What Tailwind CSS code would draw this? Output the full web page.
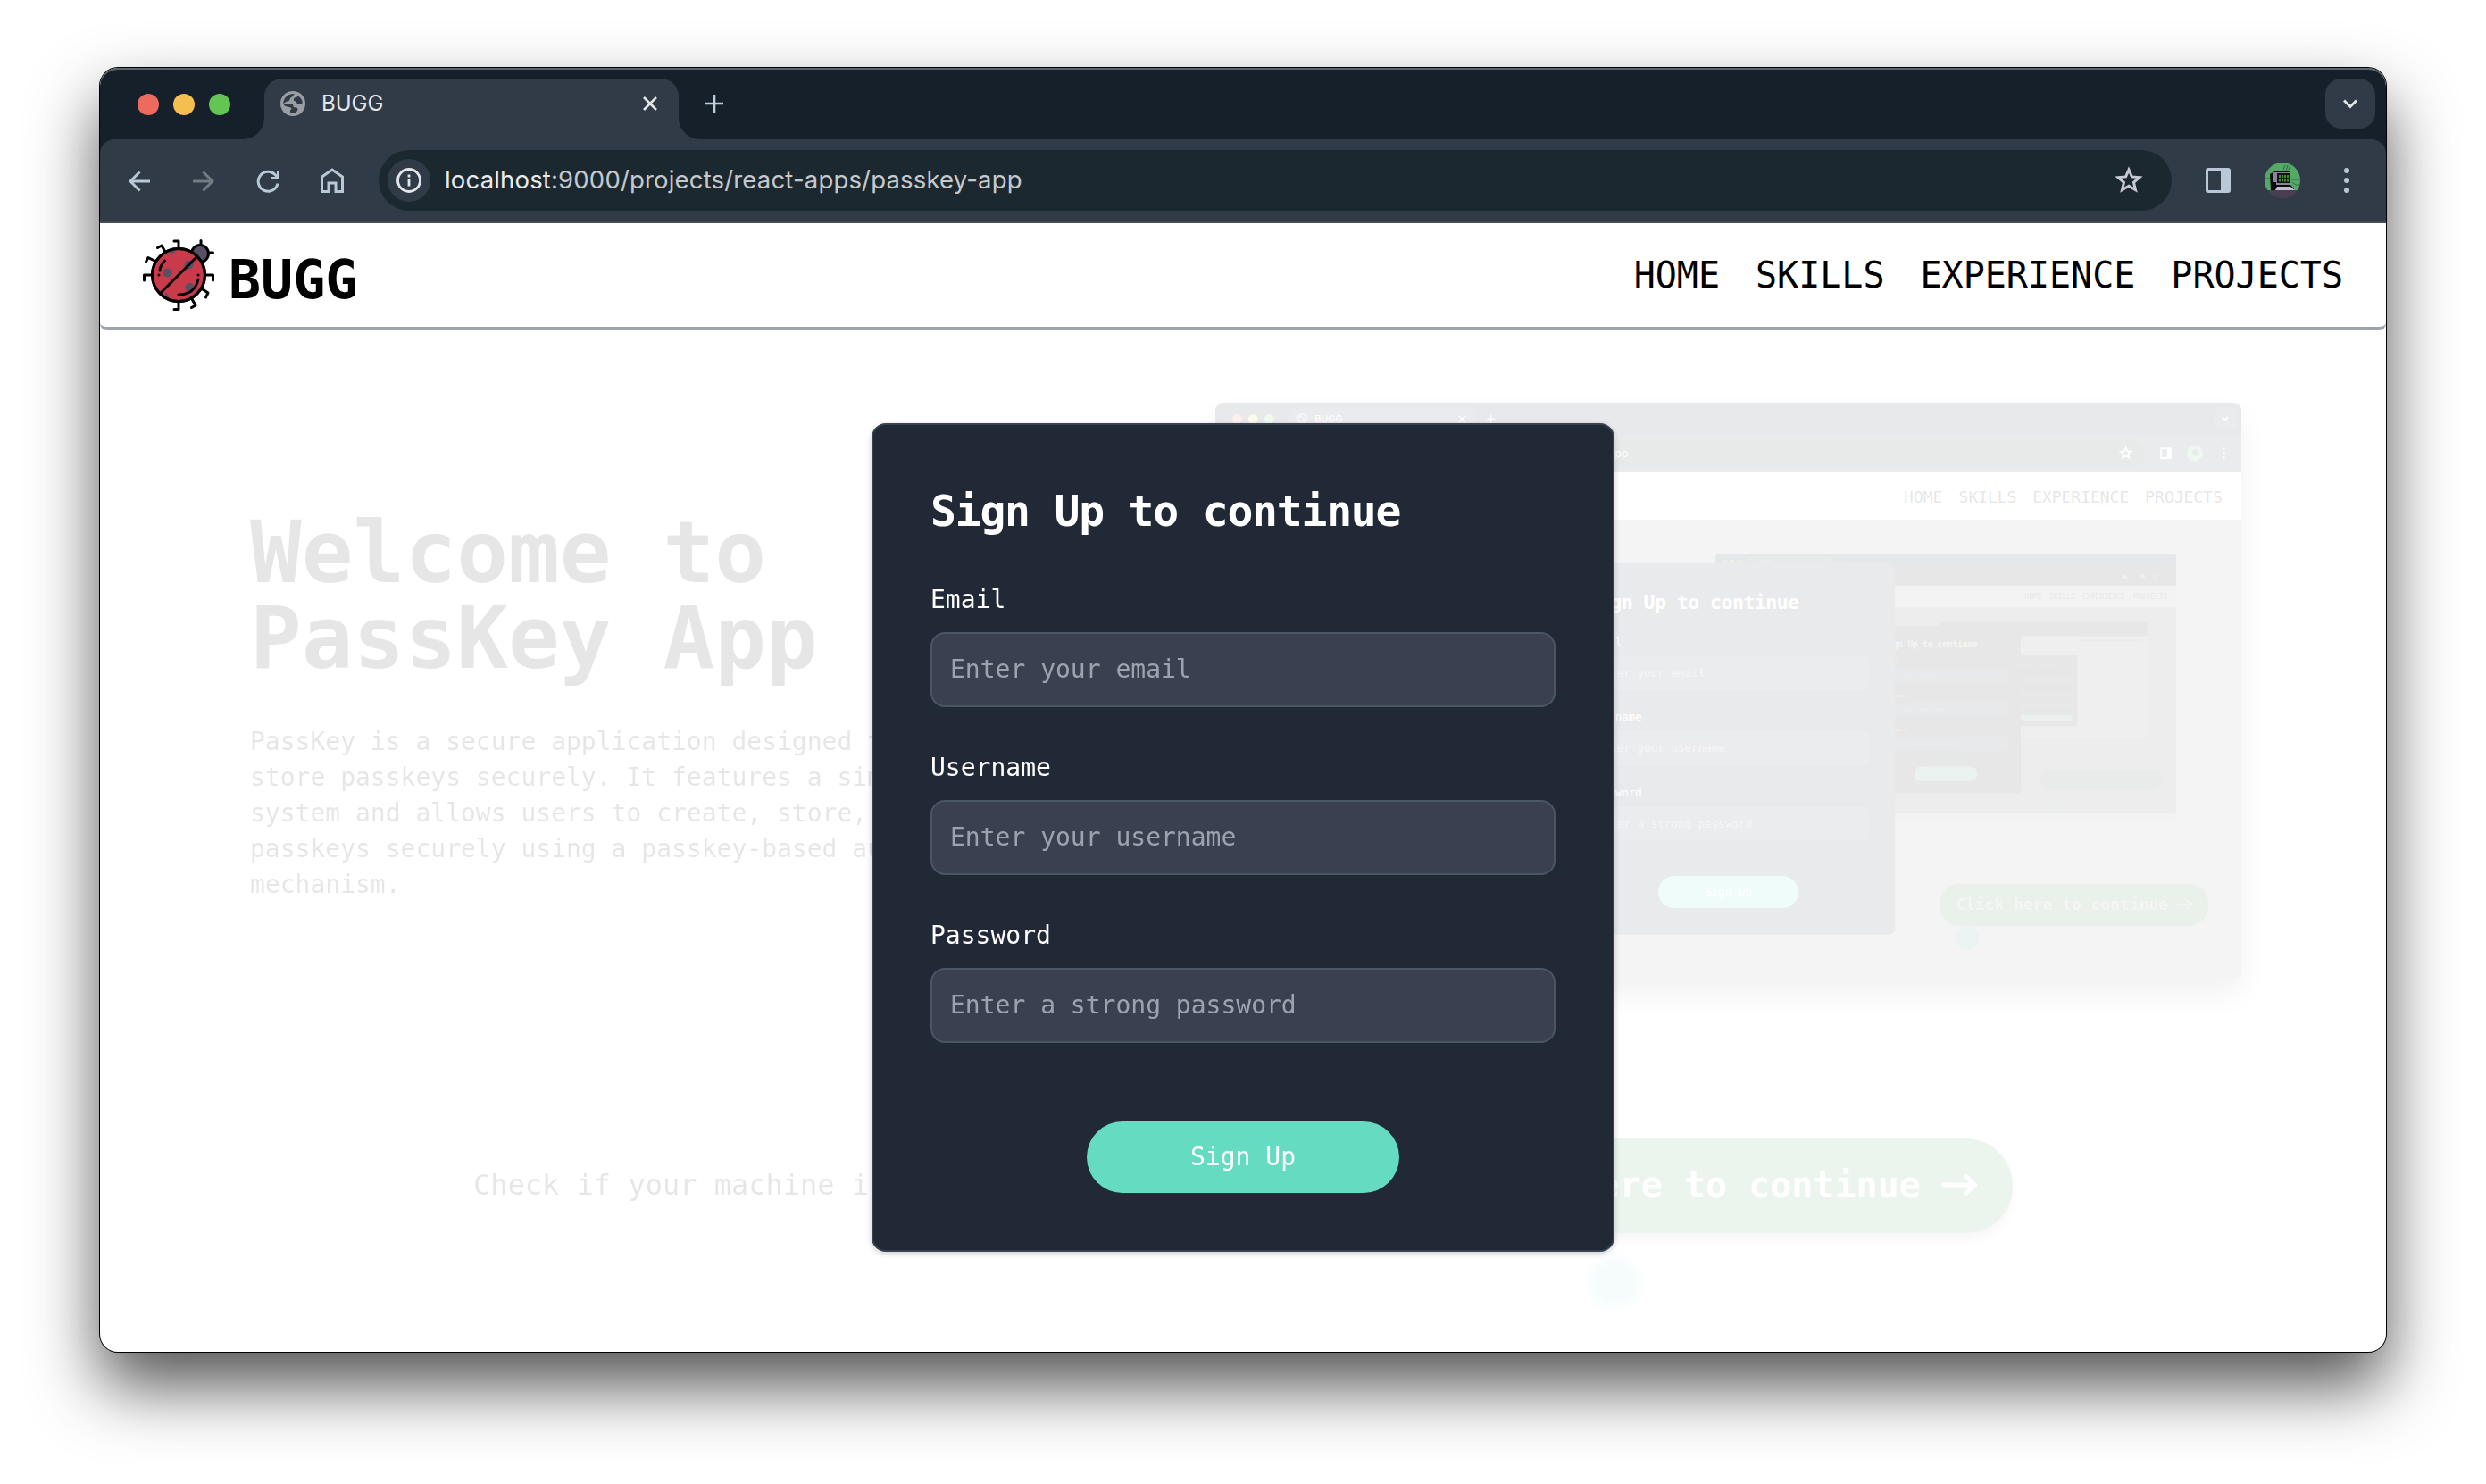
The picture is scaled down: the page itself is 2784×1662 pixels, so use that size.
<!DOCTYPE html>
<html lang="en">
<head>
<meta charset="utf-8">
<title>BUGG</title>
<script src="https://cdn.jsdelivr.net/npm/@tailwindcss/browser@4"></script>
</head>
<body class="bg-white overflow-hidden font-['DejaVu_Sans_Mono',monospace]">
<div class="w-[2784px] h-[1662px] pt-[76px] pl-[112px] overflow-hidden">
<div class="relative w-[2560px] h-[1438px] rounded-[20px] bg-white shadow-[0_0_0_1px_#000,0_38px_76px_rgba(0,0,0,0.68)]">
<div class="flex flex-col size-full rounded-[20px] overflow-hidden">

  <!-- Tab strip -->
  <div class="flex h-20 shrink-0 bg-[#15202b] rounded-t-[20px] shadow-[inset_0_2px_0_#5b666c] pl-[42px] pr-3 font-['Inter',sans-serif]">
    <div class="flex items-center gap-4 pt-[2px] w-[118px]">
      <span class="size-6 rounded-full bg-[#ed6a5e]"></span>
      <span class="size-6 rounded-full bg-[#f5bf4f]"></span>
      <span class="size-6 rounded-full bg-[#62c554]"></span>
    </div>
    <svg class="w-6 h-6 self-end" viewBox="0 0 24 24"><path d="M24 0V24H0A24 24 0 0 0 24 0Z" fill="#313b47"/></svg>
    <div class="mt-3 w-[464px] h-[68px] rounded-t-[20px] bg-[#313b47] flex items-center pl-[18px] pr-6 pb-3">
      <svg class="size-7" viewBox="0 0 28 28"><circle cx="14" cy="14" r="14" fill="#9a9da1"/><path d="M16 3.200C14 4 15 6 12.500 6.800c-1.800.6-1.500 2.400-2.500 3.700-1.200 1.500-4 .5-5.500 3L3.200 14A11 11 0 0 1 16 3.200ZM15 8.500c1-2 3.500-1 5-3A11 11 0 0 1 24.800 13c-1.800 2-4.800 2-6.300.5-1.200-1.300-1-2-2.500-2.300-1.200-.3-1.500-1.500-1-2.700ZM3.300 14H10c3.500 0 5 1.500 4.500 4 1.500.3 5 .2 5 2 0 2.500-2 4.500-5.500 4.800-2 .2-3-.3-3-.3V21c2.500 0 1.500-2.500-1-3-3-.6-6-1-6.700-4Z" fill="#313b47"/></svg>
      <span class="ml-[18px] text-[24px] leading-none text-[#e3e5e8] grow">BUGG</span>
      <svg class="size-4" viewBox="0 0 16 16" stroke="#e3e5e8" stroke-width="2.600"><path d="M1 1 15 15M15 1 1 15"/></svg>
    </div>
    <svg class="w-6 h-6 self-end" viewBox="0 0 24 24"><path d="M0 0V24H24A24 24 0 0 1 0 0Z" fill="#313b47"/></svg>
    <svg class="size-5 ml-[6px] mt-[30px]" viewBox="0 0 20 20" stroke="#c0ced9" stroke-width="2.600"><path d="M10 0V20M0 10H20"/></svg>
    <div class="ml-auto mt-3 size-14 rounded-[18px] bg-[#313b47] flex items-center justify-center">
      <svg class="w-4 h-[11px]" viewBox="0 0 16 11" fill="none" stroke="#e3e5e8" stroke-width="3"><path d="M1 1.500 8 8.500 15 1.500"/></svg>
    </div>
  </div>

  <!-- Toolbar -->
  <div class="h-[94px] shrink-0 bg-[#15202b]">
  <div class="flex items-center h-[94px] rounded-t-[16px] bg-[#313b47] shadow-[inset_0_-2px_0_#454b52] pl-[32px] pr-[38px] font-['Inter',sans-serif] pb-[2px]">
    <svg class="size-6 mt-[2px]" viewBox="0 0 24 24" fill="none" stroke="#b9c8d6" stroke-width="3"><path d="M24 12H2M12.500 1.500 2 12l10.500 10.500"/></svg>
    <svg class="size-6 ml-12 mt-[2px]" viewBox="0 0 24 24" fill="none" stroke="#717c84" stroke-width="3"><path d="M0 12H22M11.500 1.500 22 12 11.500 22.500"/></svg>
    <svg class="size-7 ml-[46px] mt-[2px]" viewBox="0 0 28 28" fill="none" stroke="#b9c8d6" stroke-width="3"><path d="M25 16.500A11 11 0 1 1 22 6.500L25 9.500M25.500 2V10.500H17"/></svg>
    <svg class="w-[26px] h-7 ml-[45px]" viewBox="0 0 26 28" fill="none" stroke="#b9c8d6" stroke-width="3"><path d="M1.500 26.500V10L13 2 24.500 10V26.500H17V17H9V26.500Z"/></svg>
    <div class="ml-[39px] w-[2008px] h-[68px] rounded-full bg-[#1c2830] flex items-center pl-[10px] pr-8">
      <div class="size-12 rounded-full bg-[#313b47] flex items-center justify-center">
        <svg class="size-7" viewBox="0 0 28 28" fill="none" stroke="#e3e5e8" stroke-width="2.800"><circle cx="14" cy="14" r="12.500"/><path d="M14 12.500V20.500M14 7.500V10.500"/></svg>
      </div>
      <div class="ml-4 grow text-[27.500px] tracking-[0.170px] leading-none text-[#c6c9cc]"><span class="text-[#e8eaec]">localhost</span>:9000/projects/react-apps/passkey-app</div>
      <svg class="size-8" viewBox="0 0 32 32" fill="none" stroke="#c6c9cf" stroke-width="3"><path d="M16 4 19.400 11.900 28 12.600 21.500 18.300 23.500 26.700 16 22.200 8.500 26.700 10.500 18.300 4 12.600 12.600 11.900Z"/></svg>
    </div>
    <svg class="size-7 ml-[38px]" viewBox="0 0 28 28"><path fill-rule="evenodd" d="M3 0H25A3 3 0 0 1 28 3V25A3 3 0 0 1 25 28H3A3 3 0 0 1 0 25V3A3 3 0 0 1 3 0ZM3 4V25H17V4Z" fill="#b9c8d6"/></svg>
    <svg class="size-10 ml-[38px] rounded-full" viewBox="0 0 40 40"><path fill="#54a868" d="M0 0H40V31H0Z"/><path fill="#4a3f52" d="M0 31H40V40H0Z"/><path d="M0 18H7M30 19H40M31 22l4 3h5M21 8l2-5M24 9l2-6M27 8l2-6" stroke="#2c6a42" fill="none"/><path fill="#0b0b0e" d="M6 13 11 10H29V25L33 29V31H7Z"/><path fill="#8b829f" d="M10 11H29V25H13V22H10Z"/><path fill="#10160f" d="M14 12H28V23H14Z"/><path stroke="#3f8f2c" stroke-width="3" stroke-dasharray="2 1" d="M16 15.500H27M16 20H27"/><path fill="#c2bccd" d="M14 27 29 27 34 31H12Z"/></svg>
    <svg class="w-[6px] h-7 ml-[49px]" viewBox="0 0 6 28" fill="#b9c8d6"><circle cx="3" cy="3" r="3"/><circle cx="3" cy="14" r="3"/><circle cx="3" cy="25" r="3"/></svg>
  </div>
  </div>

  <!-- Site header -->
  <header class="flex h-[120px] shrink-0 items-center border-b-4 border-[#9ca3af] rounded-b-[8px] pl-12 pr-12">
    <svg class="size-20" viewBox="0 0 80 80" fill="none" stroke="#000" stroke-width="3" stroke-linecap="round" stroke-linejoin="round">
      <path d="M40 10V2H35M25 14 21 7 16.500 9.500M13 24 6 20.500 3.500 25M10 40H1.500V46M70 40H78.500V46M67 56 73 60 70.500 65M55 67 59 74 54.500 76.500M40 70V78.500H35M65 9V1.500M71 15H78.500"/>
      <circle cx="64" cy="16" r="9.500" fill="#575163"/>
      <circle cx="40" cy="40" r="29.500" fill="#c93a4b"/>
      <g fill="#575163" stroke="none"><circle cx="27.500" cy="37.500" r="5"/><circle cx="51.500" cy="28.500" r="5"/><circle cx="52.500" cy="54" r="5"/><path d="M28 14q5 5 9-2ZM24 60q5 0 6 6Z"/></g>
      <circle cx="40" cy="40" r="29.500"/>
      <path d="M60 20 20 60"/>
      <path d="M24.500 24Q19 30 19 35M18 40v.1M62 40v.1M62 45Q58 62 40 62"/>
    </svg>
    <span class="ml-4 pt-[10px] text-[60px] leading-none font-bold text-black">BUGG</span>
    <nav class="ml-auto flex gap-10 text-[40px] leading-none text-black"><a>HOME</a><a>SKILLS</a><a>EXPERIENCE</a><a>PROJECTS</a></nav>
  </header>

  <!-- Page content, faded while the dialog is open -->
  <main class="relative grow opacity-10 text-black">
    <section class="flex">
      <div class="w-[1030px] pl-[168px] pt-[201px]">
        <h1 class="text-[96px] leading-[96px] font-bold">Welcome to<br>PassKey App</h1>
        <p class="mt-12 text-[28px] leading-[40px] whitespace-nowrap">PassKey is a secure application designed to<br>store passkeys securely. It features a simple<br>system and allows users to create, store, and<br>passkeys securely using a passkey-based auth<br>mechanism.</p>
      </div>
      <div class="ml-[219px] mt-[81px] w-[1149px] h-[646px] rounded-[9px] shadow-[0_16px_32px_rgba(0,0,0,0.55)]">
        <svg class="size-full rounded-[9px]" viewBox="0 0 2560 1438" preserveAspectRatio="none" font-family="DejaVu Sans Mono, monospace">
          <rect width="2560" height="1438" fill="#929292"/>
          <rect width="2560" height="174" fill="#15202b"/>
          <rect y="80" width="2560" height="94" fill="#313b47"/>
          <rect x="184" y="12" width="464" height="90" rx="20" fill="#313b47"/>
          <rect x="312" y="92" width="2008" height="68" rx="34" fill="#1c2830"/>
          <circle cx="54" cy="41" r="12" fill="#ed6a5e"/><circle cx="94" cy="41" r="12" fill="#f5bf4f"/><circle cx="134" cy="41" r="12" fill="#62c554"/>
          <circle cx="216" cy="40" r="14" fill="#9a9da1"/><path d="M208 40h8v8M217 30l8 10" stroke="#313b47" stroke-width="4" fill="none"/>
          <text x="248" y="49" font-size="24" fill="#fff" font-family="Inter, sans-serif">BUGG</text>
          <path d="M608 33 624 49M624 33 608 49M688 31V51M678 41H698" stroke="#fff" stroke-width="3"/>
          <text x="1031" y="136" font-size="28" text-anchor="end" fill="#fff" font-family="Inter, sans-serif">localhost:9000/projects/react-apps/passkey-app</text>
          <rect x="2492" y="12" width="56" height="56" rx="18" fill="#313b47"/><path d="M2513 36 2520 43 2527 36" fill="none" stroke="#fff" stroke-width="4"/>
          <path d="M2272 112 2276 121 2285 122 2278 128 2280 137 2272 132 2264 137 2266 128 2259 122 2268 121Z" fill="none" stroke="#fff" stroke-width="4"/>
          <path fill-rule="evenodd" d="M2358 112h28v28h-28ZM2362 116v20h13v-20Z" fill="#fff"/>
          <circle cx="2444" cy="126" r="20" fill="#54a868"/><circle cx="2446" cy="124" r="8" fill="#333"/>
          <g fill="#fff"><circle cx="2516" cy="115" r="3"/><circle cx="2516" cy="126" r="3"/><circle cx="2516" cy="137" r="3"/></g>
          <rect y="174" width="2560" height="118" fill="#fff"/>
          <g font-size="40"><text x="1718" y="249">HOME</text><text x="1855" y="249">SKILLS</text><text x="2039" y="249">EXPERIENCE</text><text x="2320" y="249">PROJECTS</text></g>

          <!-- Second nested window -->
          <g transform="translate(1248 378) scale(.449)">
            <rect width="2560" height="1450" y="20" rx="20" fill="#777"/>
            <rect width="2560" height="1438" rx="20" fill="#4b4b4b"/>
            <rect width="2560" height="174" rx="12" fill="#05101a"/><rect y="80" width="2560" height="94" fill="#0a0f12"/>
            <rect x="184" y="12" width="464" height="68" rx="20" fill="#1c2622"/>
            <circle cx="54" cy="41" r="12" fill="#6d3a3e"/><circle cx="94" cy="41" r="12" fill="#756f2f"/><circle cx="134" cy="41" r="12" fill="#326534"/>
            <text x="248" y="49" font-size="24" fill="#888">BUGG</text>
            <path d="M608 33 624 49M624 33 608 49M688 31V51M678 41H698" stroke="#666" stroke-width="3"/>
            <rect x="2358" y="112" width="28" height="28" fill="#556"/><circle cx="2272" cy="126" r="13" fill="#667"/><circle cx="2444" cy="126" r="18" fill="#243b2c"/><circle cx="2516" cy="126" r="4" fill="#778"/>
            <rect y="174" width="2560" height="120" fill="#888"/>
            <g font-size="40" fill="#000"><text x="1718" y="249">HOME</text><text x="1855" y="249">SKILLS</text><text x="2039" y="249">EXPERIENCE</text><text x="2320" y="249">PROJECTS</text></g>
            <!-- Third nested window -->
            <g transform="translate(1250 376) scale(.449)">
              <rect width="2560" height="1430" fill="#5f5f5f"/><rect width="2560" height="174" fill="#0c0c0c"/>
              <rect x="1718" y="220" width="790" height="24" fill="#333"/>
              <rect x="864" y="414" width="832" height="873" fill="#0a0a0a"/>
              <text x="930" y="530" font-size="48" fill="#666">Sign Up to continue</text>
              <g fill="#222"><rect x="930" y="680" width="700" height="60"/><rect x="930" y="850" width="700" height="60"/><rect x="930" y="1020" width="700" height="60"/></g>
              <rect x="930" y="1150" width="700" height="80" fill="#3a6a5c"/>
            </g>
            <rect x="1804" y="1193" width="677" height="118" rx="58" fill="#1c361f"/>
            <text x="1850" y="1264" font-size="40" fill="#444">Click here to continue →</text>
            <circle cx="1876" cy="1407" r="30" fill="#35564f"/>
            <rect x="864" y="398" width="832" height="928" rx="16" fill="#0a0a0a"/>
            <text x="930" y="516" font-size="48" font-weight="bold" letter-spacing="-1.200" fill="#999">Sign Up to continue</text>
            <g fill="#1c2430"><rect x="930" y="632" width="700" height="84" rx="16"/><rect x="930" y="820" width="700" height="84" rx="16"/><rect x="930" y="1008" width="700" height="84" rx="16"/></g>
            <g font-size="28" fill="#888"><text x="930" y="605">Email</text><text x="930" y="793">Username</text><text x="930" y="981">Password</text></g>
            <g font-size="28" fill="#555"><text x="952" y="683">Enter your email</text><text x="952" y="871">Enter your username</text><text x="952" y="1059">Enter a strong password</text></g>
            <rect x="1105" y="1178" width="350" height="80" rx="40" fill="#3a8272"/>
            <text x="1221" y="1228" font-size="28" fill="#666">Sign Up</text>
          </g>

          <rect x="1807" y="1199" width="671" height="106" rx="50" fill="#2d692d"/>
          <text x="1848" y="1264" font-size="40" font-weight="bold" fill="#999">Click here to continue</text>
          <path d="M2400 1251h36m-13-11 13 11-13 11" stroke="#999" stroke-width="4" fill="none"/>
          <circle cx="1876" cy="1334" r="30" fill="#4e8880"/>
          <rect x="864" y="398" width="832" height="928" rx="16" fill="#212836"/>
          <text x="930" y="515" font-size="48" font-weight="bold" letter-spacing="-1.200" fill="#fff">Sign Up to continue</text>
          <g fill="#3b4050" stroke="#4d5462" stroke-width="2"><rect x="931" y="633" width="698" height="82" rx="16"/><rect x="931" y="821" width="698" height="82" rx="16"/><rect x="931" y="1009" width="698" height="82" rx="16"/></g>
          <g font-size="28" fill="#fff"><text x="930" y="605">Email</text><text x="930" y="793">Username</text><text x="930" y="981">Password</text></g>
          <g font-size="28" fill="#9ca3af"><text x="952" y="683">Enter your email</text><text x="952" y="871">Enter your username</text><text x="952" y="1059">Enter a strong password</text></g>
          <rect x="1105" y="1180" width="350" height="80" rx="40" fill="#65dcc2"/>
          <text x="1221" y="1229" font-size="28" fill="#fff">Sign Up</text>
        </svg>
      </div>
    </section>
    <section class="mt-[178px] flex items-center h-[106px] pl-[418px]">
      <span class="text-[32px] whitespace-nowrap w-[1053px] pb-[2px]">Check if your machine is compatible</span>
      <button class="relative flex items-center w-[671px] h-[106px] rounded-full bg-[#3b9b4f] text-white pl-[38px] pb-[2px] shadow-[0_8px_12px_rgba(0,0,0,0.35)]">
        <span class="text-[40px] font-bold leading-none whitespace-nowrap">Click here to continue</span>
        <svg class="ml-[23px] w-10 h-6" viewBox="0 0 40 24" fill="none" stroke="#fff" stroke-width="5" stroke-linecap="round" stroke-linejoin="round"><path d="M2.500 12H37M27.500 2.500 37.500 12 27.500 21.500"/></svg>
      </button>
    </section>
    <span class="absolute left-[1667px] top-[1038px] size-[58px] rounded-full bg-[#a5e2e2] blur-[6px]"></span>
  </main>
</div>

<!-- Sign-up dialog -->
<form class="absolute left-[864px] top-[398px] w-[832px] h-[928px] rounded-[16px] border-2 border-[#374151] bg-[#212836] p-16 flex flex-col shadow-[0_2px_6px_rgba(0,0,0,0.2)] text-white text-[28px] leading-[40px]">
  <h2 class="h-28 text-[48px] leading-[64px] font-bold tracking-tight">Sign Up to continue</h2>
  <label>Email</label>
  <div class="mt-4 h-[84px] rounded-[16px] border-2 border-[#4b5563] bg-[#3b4050] px-5 flex items-center text-[#9ca3af]">Enter your email</div>
  <label class="mt-12">Username</label>
  <div class="mt-4 h-[84px] rounded-[16px] border-2 border-[#4b5563] bg-[#3b4050] px-5 flex items-center text-[#9ca3af]">Enter your username</div>
  <label class="mt-12">Password</label>
  <div class="mt-4 h-[84px] rounded-[16px] border-2 border-[#4b5563] bg-[#3b4050] px-5 flex items-center text-[#9ca3af]">Enter a strong password</div>
  <button type="button" class="mt-[88px] mx-auto w-[350px] h-20 rounded-full bg-[#65dcc2]">Sign Up</button>
</form>
</div>
</div>
</body>
</html>
